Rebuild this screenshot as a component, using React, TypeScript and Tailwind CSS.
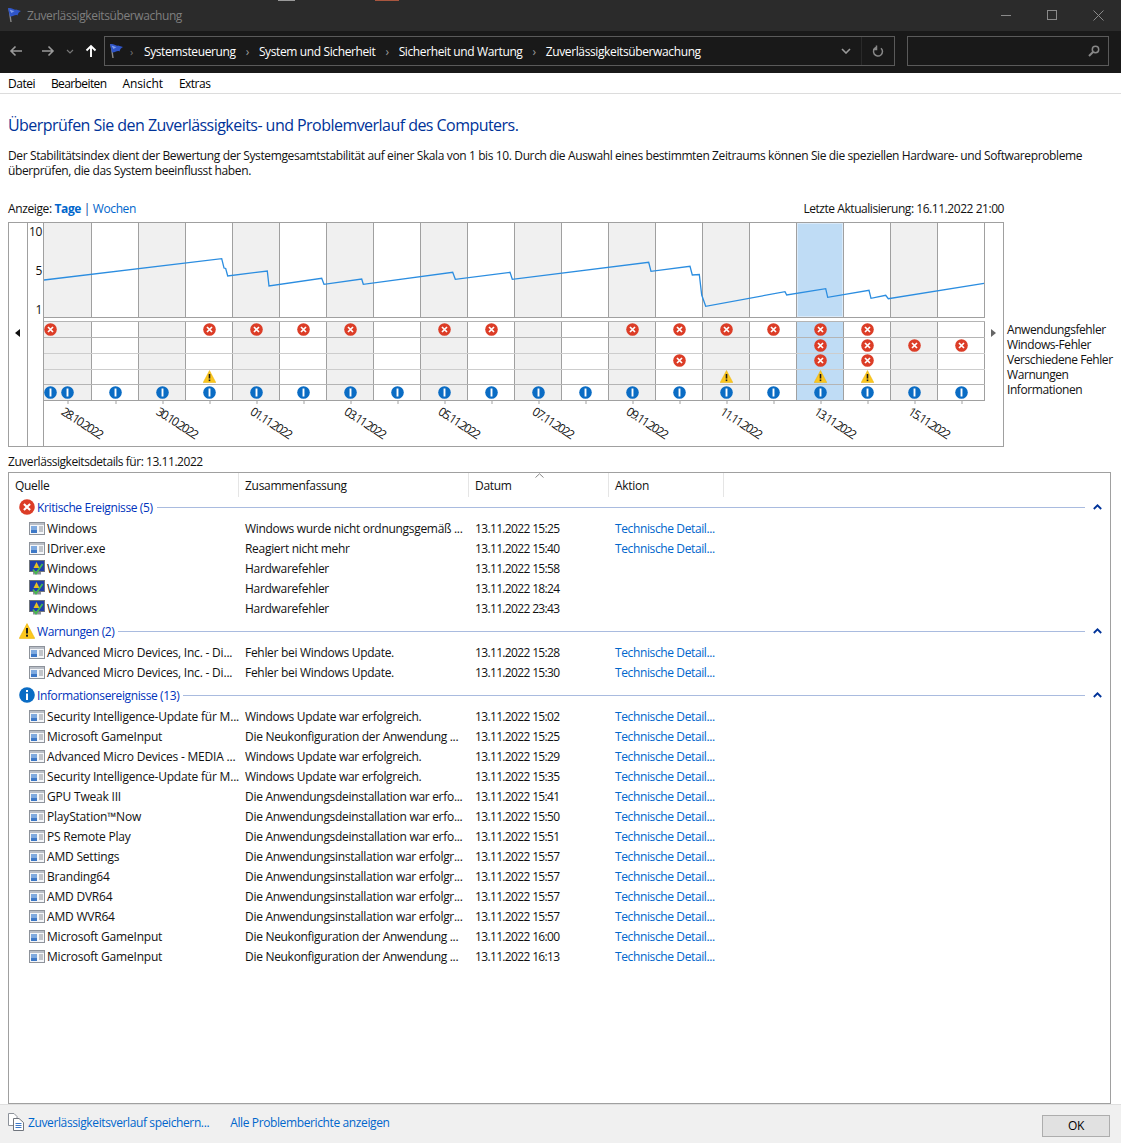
import { ReactNode } from "react";

const crumbs = ["System und Sicherheit", "Sicherheit und Wartung", "Zuverlässigkeitsüberwachung"];

const linePoints =
  "44,280 221.7,258.7 224,268 225.7,268.5 227.7,276 267.3,271 269,286 321.7,278.3 324,284.3 361.7,279 363.3,284.3 " +
  "452.7,272.3 455.3,279.3 510,272.3 512.3,279.3 648.7,262.3 651,271.3 690,266.3 692.3,275 699.3,274.5 701.7,295 " +
  "705.7,306.3 785,291.7 786.7,295 825.7,288.7 827.7,297.3 869,290.3 871,298.3 885.7,295.3 888.3,298.7 984,283.3";

// which day columns hold a marker, per row of the chart
const errorRows = [
  [3, 4, 5, 6, 8, 9, 12, 13, 14, 15, 16, 17],
  [16, 17, 18, 19],
  [13, 16, 17],
];
const warnRow = [3, 14, 16, 17];
const days = Array.from({ length: 20 }, (_, i) => i);
const dates = ["28.10.2022", "30.10.2022", "01.11.2022", "03.11.2022", "05.11.2022", "07.11.2022", "09.11.2022", "11.11.2022", "13.11.2022", "15.11.2022"];
const legend = ["Anwendungsfehler", "Windows-Fehler", "Verschiedene Fehler", "Warnungen", "Informationen"];

interface Row {
  icon: "app" | "hw";
  source: string;
  summary: string;
  date: string;
  details: boolean;
}

const app = (source: string, summary: string, date: string): Row => ({ icon: "app", source, summary, date, details: true });
const hw = (date: string): Row => ({ icon: "hw", source: "Windows", summary: "Hardwarefehler", date, details: false });

const critical: Row[] = [
  app("Windows", "Windows wurde nicht ordnungsgemäß ...", "13.11.2022 15:25"),
  app("IDriver.exe", "Reagiert nicht mehr", "13.11.2022 15:40"),
  hw("13.11.2022 15:58"),
  hw("13.11.2022 18:24"),
  hw("13.11.2022 23:43"),
];
const warnings: Row[] = [
  app("Advanced Micro Devices, Inc. - Di...", "Fehler bei Windows Update.", "13.11.2022 15:28"),
  app("Advanced Micro Devices, Inc. - Di...", "Fehler bei Windows Update.", "13.11.2022 15:30"),
];
const infos: Row[] = [
  app("Security Intelligence-Update für M...", "Windows Update war erfolgreich.", "13.11.2022 15:02"),
  app("Microsoft GameInput", "Die Neukonfiguration der Anwendung ...", "13.11.2022 15:25"),
  app("Advanced Micro Devices - MEDIA ...", "Windows Update war erfolgreich.", "13.11.2022 15:29"),
  app("Security Intelligence-Update für M...", "Windows Update war erfolgreich.", "13.11.2022 15:35"),
  app("GPU Tweak III", "Die Anwendungsdeinstallation war erfo...", "13.11.2022 15:41"),
  app("PlayStation™Now", "Die Anwendungsdeinstallation war erfo...", "13.11.2022 15:50"),
  app("PS Remote Play", "Die Anwendungsdeinstallation war erfo...", "13.11.2022 15:51"),
  app("AMD Settings", "Die Anwendungsinstallation war erfolgr...", "13.11.2022 15:57"),
  app("Branding64", "Die Anwendungsinstallation war erfolgr...", "13.11.2022 15:57"),
  app("AMD DVR64", "Die Anwendungsinstallation war erfolgr...", "13.11.2022 15:57"),
  app("AMD WVR64", "Die Anwendungsinstallation war erfolgr...", "13.11.2022 15:57"),
  app("Microsoft GameInput", "Die Neukonfiguration der Anwendung ...", "13.11.2022 16:00"),
  app("Microsoft GameInput", "Die Neukonfiguration der Anwendung ...", "13.11.2022 16:13"),
];

function Flag() {
  return (
    <svg width="16" height="16" viewBox="0 0 15 16" className="shrink-0">
      <path d="M2.5 1 L4.5 15" stroke="#8a8a8a" strokeWidth="1.4" />
      <path d="M1.5 1.5 C5 0 7 3.5 9.5 2.5 L14.5 4 C12 5.5 11.5 6.5 11 8.5 C8.5 7 6.5 10 3.5 9.5 Z" fill="#2f55c8" />
      <path d="M3 2.8 C5 2.3 6 4.3 8 4 L5 6 Z" fill="#7f9bea" />
    </svg>
  );
}

function ErrorIcon({ size = 13 }: { size?: number }) {
  return (
    <svg width={size} height={size} viewBox="0 0 13 13" className="shrink-0">
      <circle cx="6.5" cy="6.5" r="6.3" fill="#dc3d27" />
      <path d="M4 4 L9 9 M9 4 L4 9" stroke="#fff" strokeWidth="1.7" />
    </svg>
  );
}

function WarnIcon({ size = 13 }: { size?: number }) {
  return (
    <svg width={size} height={size} viewBox="0 0 13 13" className="shrink-0">
      <path d="M6.5 0.5 L12.8 12.5 L0.2 12.5 Z" fill="#fcc71f" stroke="#eab308" strokeWidth="0.5" />
      <path d="M6.5 4 L6.5 8.5" stroke="#1a1a1a" strokeWidth="1.6" />
      <rect x="5.7" y="9.5" width="1.6" height="1.6" fill="#1a1a1a" />
    </svg>
  );
}

function InfoIcon() {
  return (
    <svg width="13" height="13" viewBox="0 0 13 13" className="shrink-0">
      <circle cx="6.5" cy="6.5" r="6.3" fill="#0a6cc4" />
      <path d="M6.5 2.5 L6.5 10.5" stroke="#fff" strokeWidth="1.9" />
    </svg>
  );
}

function InfoLarge() {
  return (
    <svg width="16" height="16" viewBox="0 0 16 16" className="shrink-0">
      <circle cx="8" cy="8" r="7.8" fill="#0a6cc4" />
      <rect x="7" y="3" width="2" height="2" fill="#fff" />
      <rect x="7" y="6.5" width="2" height="6.5" fill="#fff" />
    </svg>
  );
}

function AppIcon() {
  return (
    <svg width="16" height="16" viewBox="0 0 16 16" className="shrink-0">
      <rect x="0.5" y="2.5" width="15" height="12" fill="#f4f6f9" stroke="#8d929a" />
      <rect x="1" y="3" width="14" height="2" fill="#b9bec6" />
      <rect x="2" y="6" width="6" height="7" fill="#7faadf" />
      <rect x="2" y="10" width="6" height="3" fill="#3d78c6" />
      <path d="M10 7 H14 M10 9 H14 M10 11 H14" stroke="#8d929a" />
    </svg>
  );
}

function HardwareIcon() {
  return (
    <svg width="16" height="16" viewBox="0 0 16 16" className="shrink-0">
      <rect x="0.5" y="0.5" width="15" height="11" fill="#1f3fa8" stroke="#6f747c" />
      <path d="M7.5 2 L10.5 8 L4.5 8 Z" fill="#e8c020" />
      <rect x="4" y="12" width="8" height="2.5" fill="#8d929a" />
      <path d="M4 9.5 L7 13.5 L13.5 4" fill="none" stroke="#46b84f" strokeWidth="1.7" />
    </svg>
  );
}

function DocsIcon() {
  return (
    <svg width="16" height="18" viewBox="0 0 16 18" className="-mt-[4px] shrink-0">
      <path d="M0.5 0.5 H6 L9 3.5 V12.5 H0.5 Z" fill="#fff" stroke="#8d929a" />
      <path d="M5.5 5.5 H11 L15.5 9.5 V17.5 H5.5 Z" fill="#fff" stroke="#70757d" />
      <path d="M7.5 10.5 H13.5 M7.5 12.5 H13.5 M7.5 14.5 H13.5" stroke="#3d78c6" />
    </svg>
  );
}

function Cell({ day, children }: { day: number; children?: ReactNode }) {
  const bg = day === 16 ? "bg-[#bfdcf5]" : day % 2 === 0 ? "bg-[#f0f0f0]" : "bg-white";
  const width = day === 0 ? "w-[48px]" : "w-[47px]";
  return <div className={`relative flex items-center justify-center border-r border-[#a0a0a0] ${width} ${bg}`}>{children}</div>;
}

function ChartRow({ className, children }: { className: string; children: (day: number) => ReactNode }) {
  return (
    <div className={`flex border-b ${className}`}>
      {days.map((d) => (
        <Cell key={d} day={d}>
          {children(d)}
        </Cell>
      ))}
    </div>
  );
}

function Chart() {
  return (
    <div className="flex h-[225px] w-[996px] shrink-0 border border-[#a0a0a0] bg-white">
      <div className="flex w-[19px] shrink-0 justify-center border-r border-[#a0a0a0] pt-[106px] pr-px">
        <svg width="5" height="8" viewBox="0 0 5 8">
          <path d="M5 0 V8 L0 4 Z" fill="#111" />
        </svg>
      </div>
      <div className="flex w-[16px] shrink-0 flex-col items-end gap-[24px] border-r border-[#a0a0a0] pt-px pr-[1px]">
        <span>10</span>
        <span>5</span>
        <span>1</span>
      </div>
      <div className="flex w-[941px] shrink-0 flex-col">
        <div className="relative flex h-[95px] border-b border-[#a0a0a0]">
          {days.map((d) => (
            <Cell key={d} day={d}>
              {d === 16 && <div className="h-full w-full border border-[#d9eafa]" />}
            </Cell>
          ))}
          <svg viewBox="44 223 941 94" className="absolute top-0 left-0 h-[94px] w-[941px]">
            <polyline points={linePoints} fill="none" stroke="#2b8de0" strokeWidth="1.3" />
          </svg>
        </div>
        <div className="h-[3px]" />
        <div className="border-t border-[#b4b4b4]">
          <ChartRow className="h-[16px] border-[#b4b4b4]">
            {(d) =>
              d === 0 ? (
                <span className="absolute left-0">
                  <ErrorIcon />
                </span>
              ) : (
                errorRows[0].includes(d) && <ErrorIcon />
              )
            }
          </ChartRow>
          <ChartRow className="h-[16px] border-[#cdcdcd]">{(d) => errorRows[1].includes(d) && <ErrorIcon />}</ChartRow>
          <ChartRow className="h-[16px] border-[#cdcdcd]">
            {(d) =>
              errorRows[2].includes(d) && (
                <span className="-translate-y-px">
                  <ErrorIcon />
                </span>
              )
            }
          </ChartRow>
          <ChartRow className="h-[15px] border-[#b4b4b4]">
            {(d) =>
              warnRow.includes(d) && (
                <span className="-translate-y-px">
                  <WarnIcon />
                </span>
              )
            }
          </ChartRow>
          <ChartRow className="h-[16px] border-[#a0a0a0]">
            {(d) => (
              <>
                {d === 0 && (
                  <span className="absolute left-0">
                    <InfoIcon />
                  </span>
                )}
                <InfoIcon />
              </>
            )}
          </ChartRow>
        </div>
        <div className="flex h-[3px]">
          {days.map((d) => (
            <div key={d} className={`flex justify-center ${d === 0 ? "w-[48px]" : "w-[47px]"}`}>
              <div className="h-full w-[2px] bg-[#d0d0d0]" />
            </div>
          ))}
        </div>
        <div className="flex flex-1">
          {dates.map((date, i) => (
            <div key={date} className={`flex items-center justify-center ${i === 0 ? "w-[95px]" : "w-[94px]"}`}>
              <span className="-translate-x-[9px] -translate-y-[3px] rotate-[33deg] tracking-[-1.5px] whitespace-nowrap">{date}</span>
            </div>
          ))}
        </div>
      </div>
      <div className="flex w-[18px] shrink-0 justify-center pt-[106px] pr-px">
        <svg width="5" height="8" viewBox="0 0 5 8">
          <path d="M0 0 V8 L5 4 Z" fill="#666" />
        </svg>
      </div>
    </div>
  );
}

function Group({ icon, label, rows, first }: { icon: ReactNode; label: string; rows: Row[]; first?: boolean }) {
  return (
    <>
      <div className={`mb-px flex h-5 items-center pl-[10px] ${first ? "" : "mt-[3px]"}`}>
        {icon}
        <span className="ml-[2px] text-[#0033bc]">{label}</span>
        <div className="ml-[4px] h-px flex-1 bg-[#a9bbdf]" />
        <div className="flex w-[25px] justify-center">
          <svg width="9" height="6" viewBox="0 0 9 6">
            <path d="M0.8 5 L4.5 1.3 L8.2 5" fill="none" stroke="#003399" strokeWidth="1.8" />
          </svg>
        </div>
      </div>
      {rows.map((r, i) => (
        <div key={i} className="flex h-5 items-center whitespace-nowrap">
          <div className="flex w-[230px] items-center gap-[2px] pl-[20px] tracking-[-0.2px]">
            {r.icon === "app" ? <AppIcon /> : <HardwareIcon />}
            <span>{r.source}</span>
          </div>
          <div className="w-[230px] pl-[6px] tracking-[-0.3px]">{r.summary}</div>
          <div className="w-[140px] pl-[6px] tracking-[-0.65px]">{r.date}</div>
          <div className="pl-[6px] text-[#0066cc]">{r.details && "Technische Detail..."}</div>
        </div>
      ))}
    </>
  );
}

export default function App() {
  return (
    <div className="flex h-[1143px] w-[1121px] flex-col overflow-hidden bg-white font-['Open_Sans',sans-serif] text-[12px] leading-[15px] tracking-[-0.38px] text-[#111]">
      {/* Sliver of the window behind, along the top edge */}
      <div className="flex h-px shrink-0 bg-[#2b2b2b]">
        <div className="ml-[278px] w-[17px] bg-[#9a9a9a]" />
        <div className="ml-[80px] w-[24px] bg-[#a8563f]" />
      </div>

      {/* Title bar */}
      <div className="flex h-[30px] shrink-0 items-center bg-[#2b2b2b] pb-[2px] pl-[6px] text-[#7f7f7f]">
        <Flag />
        <span className="ml-[5px] flex-1">Zuverlässigkeitsüberwachung</span>
        <div className="flex w-[138px] items-center">
          <div className="flex w-[46px] justify-center">
            <div className="h-px w-[10px] bg-[#8a8a8a]" />
          </div>
          <div className="flex w-[46px] justify-center">
            <div className="h-[10px] w-[10px] border border-[#8a8a8a]" />
          </div>
          <div className="flex w-[46px] justify-center">
            <svg width="11" height="11" viewBox="0 0 11 11">
              <path d="M0.5 0.5 L10.5 10.5 M10.5 0.5 L0.5 10.5" stroke="#8a8a8a" />
            </svg>
          </div>
        </div>
      </div>

      {/* Address bar */}
      <div className="flex h-[42px] shrink-0 items-start bg-[#191919] pt-[5px] text-white">
        <div className="flex h-[30px] w-[104px] items-center pl-[9px]">
          <svg width="14" height="12" viewBox="0 0 14 12">
            <path d="M13 6 H2 M6.5 1.5 L2 6 L6.5 10.5" fill="none" stroke="#9a9a9a" strokeWidth="1.6" />
          </svg>
          <svg width="14" height="12" viewBox="0 0 14 12" className="ml-[18px]">
            <path d="M1 6 H12 M7.5 1.5 L12 6 L7.5 10.5" fill="none" stroke="#9a9a9a" strokeWidth="1.6" />
          </svg>
          <svg width="8" height="5" viewBox="0 0 8 5" className="ml-[11px]">
            <path d="M1 1 L4 4 L7 1" fill="none" stroke="#777" strokeWidth="1.2" />
          </svg>
          <svg width="12" height="14" viewBox="0 0 12 14" className="ml-[11px]">
            <path d="M6 13 V2 M1.5 6.5 L6 2 L10.5 6.5" fill="none" stroke="#fff" strokeWidth="1.9" />
          </svg>
        </div>
        <div className="flex h-[30px] w-[791px] items-center border border-[#5a5a5a] pl-[3px] tracking-[-0.38px]">
          <Flag />
          <span className="ml-[6px] text-[11px] text-[#777]">›</span>
          <span className="ml-[11px]">Systemsteuerung</span>
          {crumbs.map((c) => (
            <span key={c} className="flex items-center">
              <span className="mx-[10px] text-[#9a9a9a]">›</span>
              {c}
            </span>
          ))}
          <div className="ml-auto flex h-full items-center">
            <svg width="10" height="6" viewBox="0 0 10 6">
              <path d="M1 1 L5 5 L9 1" fill="none" stroke="#9a9a9a" strokeWidth="1.6" />
            </svg>
            <div className="ml-[10px] h-full w-px bg-[#2a2a2a]" />
            <svg width="12" height="13" viewBox="0 0 12 13" className="mx-[10px]">
              <path d="M4 2.5 A4.5 4.5 0 1 0 9 3.2 M4.5 0.5 V4.5 H1" fill="none" stroke="#888" strokeWidth="1.5" />
            </svg>
          </div>
        </div>
        <div className="ml-[12px] flex h-[30px] w-[202px] items-center justify-end border border-[#5a5a5a] pr-[8px]">
          <svg width="12" height="12" viewBox="0 0 12 12">
            <circle cx="7.5" cy="4.5" r="3.2" fill="none" stroke="#888" strokeWidth="1.5" />
            <path d="M5 7 L1 11" stroke="#888" strokeWidth="2" />
          </svg>
        </div>
      </div>

      {/* Menu */}
      <div className="flex h-[21px] shrink-0 items-center gap-[16px] border-b border-[#dcdcdc] pl-[8px] tracking-[-0.5px] text-black">
        <span>Datei</span>
        <span className="tracking-[-0.6px]">Bearbeiten</span>
        <span className="tracking-[-0.1px]">Ansicht</span>
        <span>Extras</span>
      </div>

      <div className="flex flex-1 flex-col pl-[8px]">
        <h1 className="mt-[20px] text-[16px] leading-[22px] font-normal tracking-[-0.54px] text-[#003399]">
          Überprüfen Sie den Zuverlässigkeits- und Problemverlauf des Computers.
        </h1>
        <p className="mt-[12px] w-[1095px]">
          Der Stabilitätsindex dient der Bewertung der Systemgesamtstabilität auf einer Skala von 1 bis 10. Durch die Auswahl eines bestimmten Zeitraums können Sie die speziellen Hardware- und Softwareprobleme überprüfen, die das System beeinflusst haben.
        </p>
        <div className="mt-[22px] flex h-4 w-[996px] items-center justify-between">
          <div>
            Anzeige: <span className="font-bold text-[#0066cc]">Tage</span> <span className="text-[#003399]">|</span> <span className="text-[#0066cc]">Wochen</span>
          </div>
          <span className="tracking-[-0.45px]">Letzte Aktualisierung: 16.11.2022 21:00</span>
        </div>
        <div className="mt-[6px] flex items-start">
          <Chart />
          <div className="mt-[100px] ml-[3px] flex flex-col tracking-[-0.42px] whitespace-nowrap">
            {legend.map((l) => (
              <span key={l}>{l}</span>
            ))}
          </div>
        </div>
        <div className="mt-[7px] h-4 tracking-[-0.45px]">Zuverlässigkeitsdetails für: 13.11.2022</div>
        <div className="mt-[2px] flex h-[632px] w-[1103px] flex-col border border-[#a0a0a0]">
          <div className="relative flex h-6 shrink-0 items-center tracking-[-0.3px]">
            <div className="flex h-full w-[230px] items-center border-r border-[#e5e5e5] pl-[6px]">Quelle</div>
            <div className="flex h-full w-[230px] items-center border-r border-[#e5e5e5] pl-[6px]">Zusammenfassung</div>
            <div className="flex h-full w-[140px] items-center border-r border-[#e5e5e5] pl-[6px]">Datum</div>
            <div className="flex h-full w-[115px] items-center border-r border-[#e5e5e5] pl-[6px]">Aktion</div>
            <svg width="9" height="5" viewBox="0 0 9 5" className="absolute top-0 left-[526px]">
              <path d="M0.5 4.5 L4.5 0.8 L8.5 4.5" fill="none" stroke="#888" />
            </svg>
          </div>
          <Group first icon={<ErrorIcon size={16} />} label="Kritische Ereignisse (5)" rows={critical} />
          <Group icon={<WarnIcon size={16} />} label="Warnungen (2)" rows={warnings} />
          <Group icon={<InfoLarge />} label="Informationsereignisse (13)" rows={infos} />
        </div>
      </div>

      {/* Footer */}
      <div className="flex h-[39px] shrink-0 items-center border-t border-[#dfdfdf] bg-[#f0f0f0] pr-[11px] pl-[8px]">
        <DocsIcon />
        <span className="-mt-[4px] ml-[4px] text-[#0066cc]">Zuverlässigkeitsverlauf speichern...</span>
        <span className="-mt-[4px] ml-[21px] text-[#0066cc]">Alle Problemberichte anzeigen</span>
        <button className="mt-[3px] ml-auto h-[22px] w-[68px] border border-[#adadad] bg-[#e1e1e1] text-center text-black">OK</button>
      </div>
    </div>
  );
}
